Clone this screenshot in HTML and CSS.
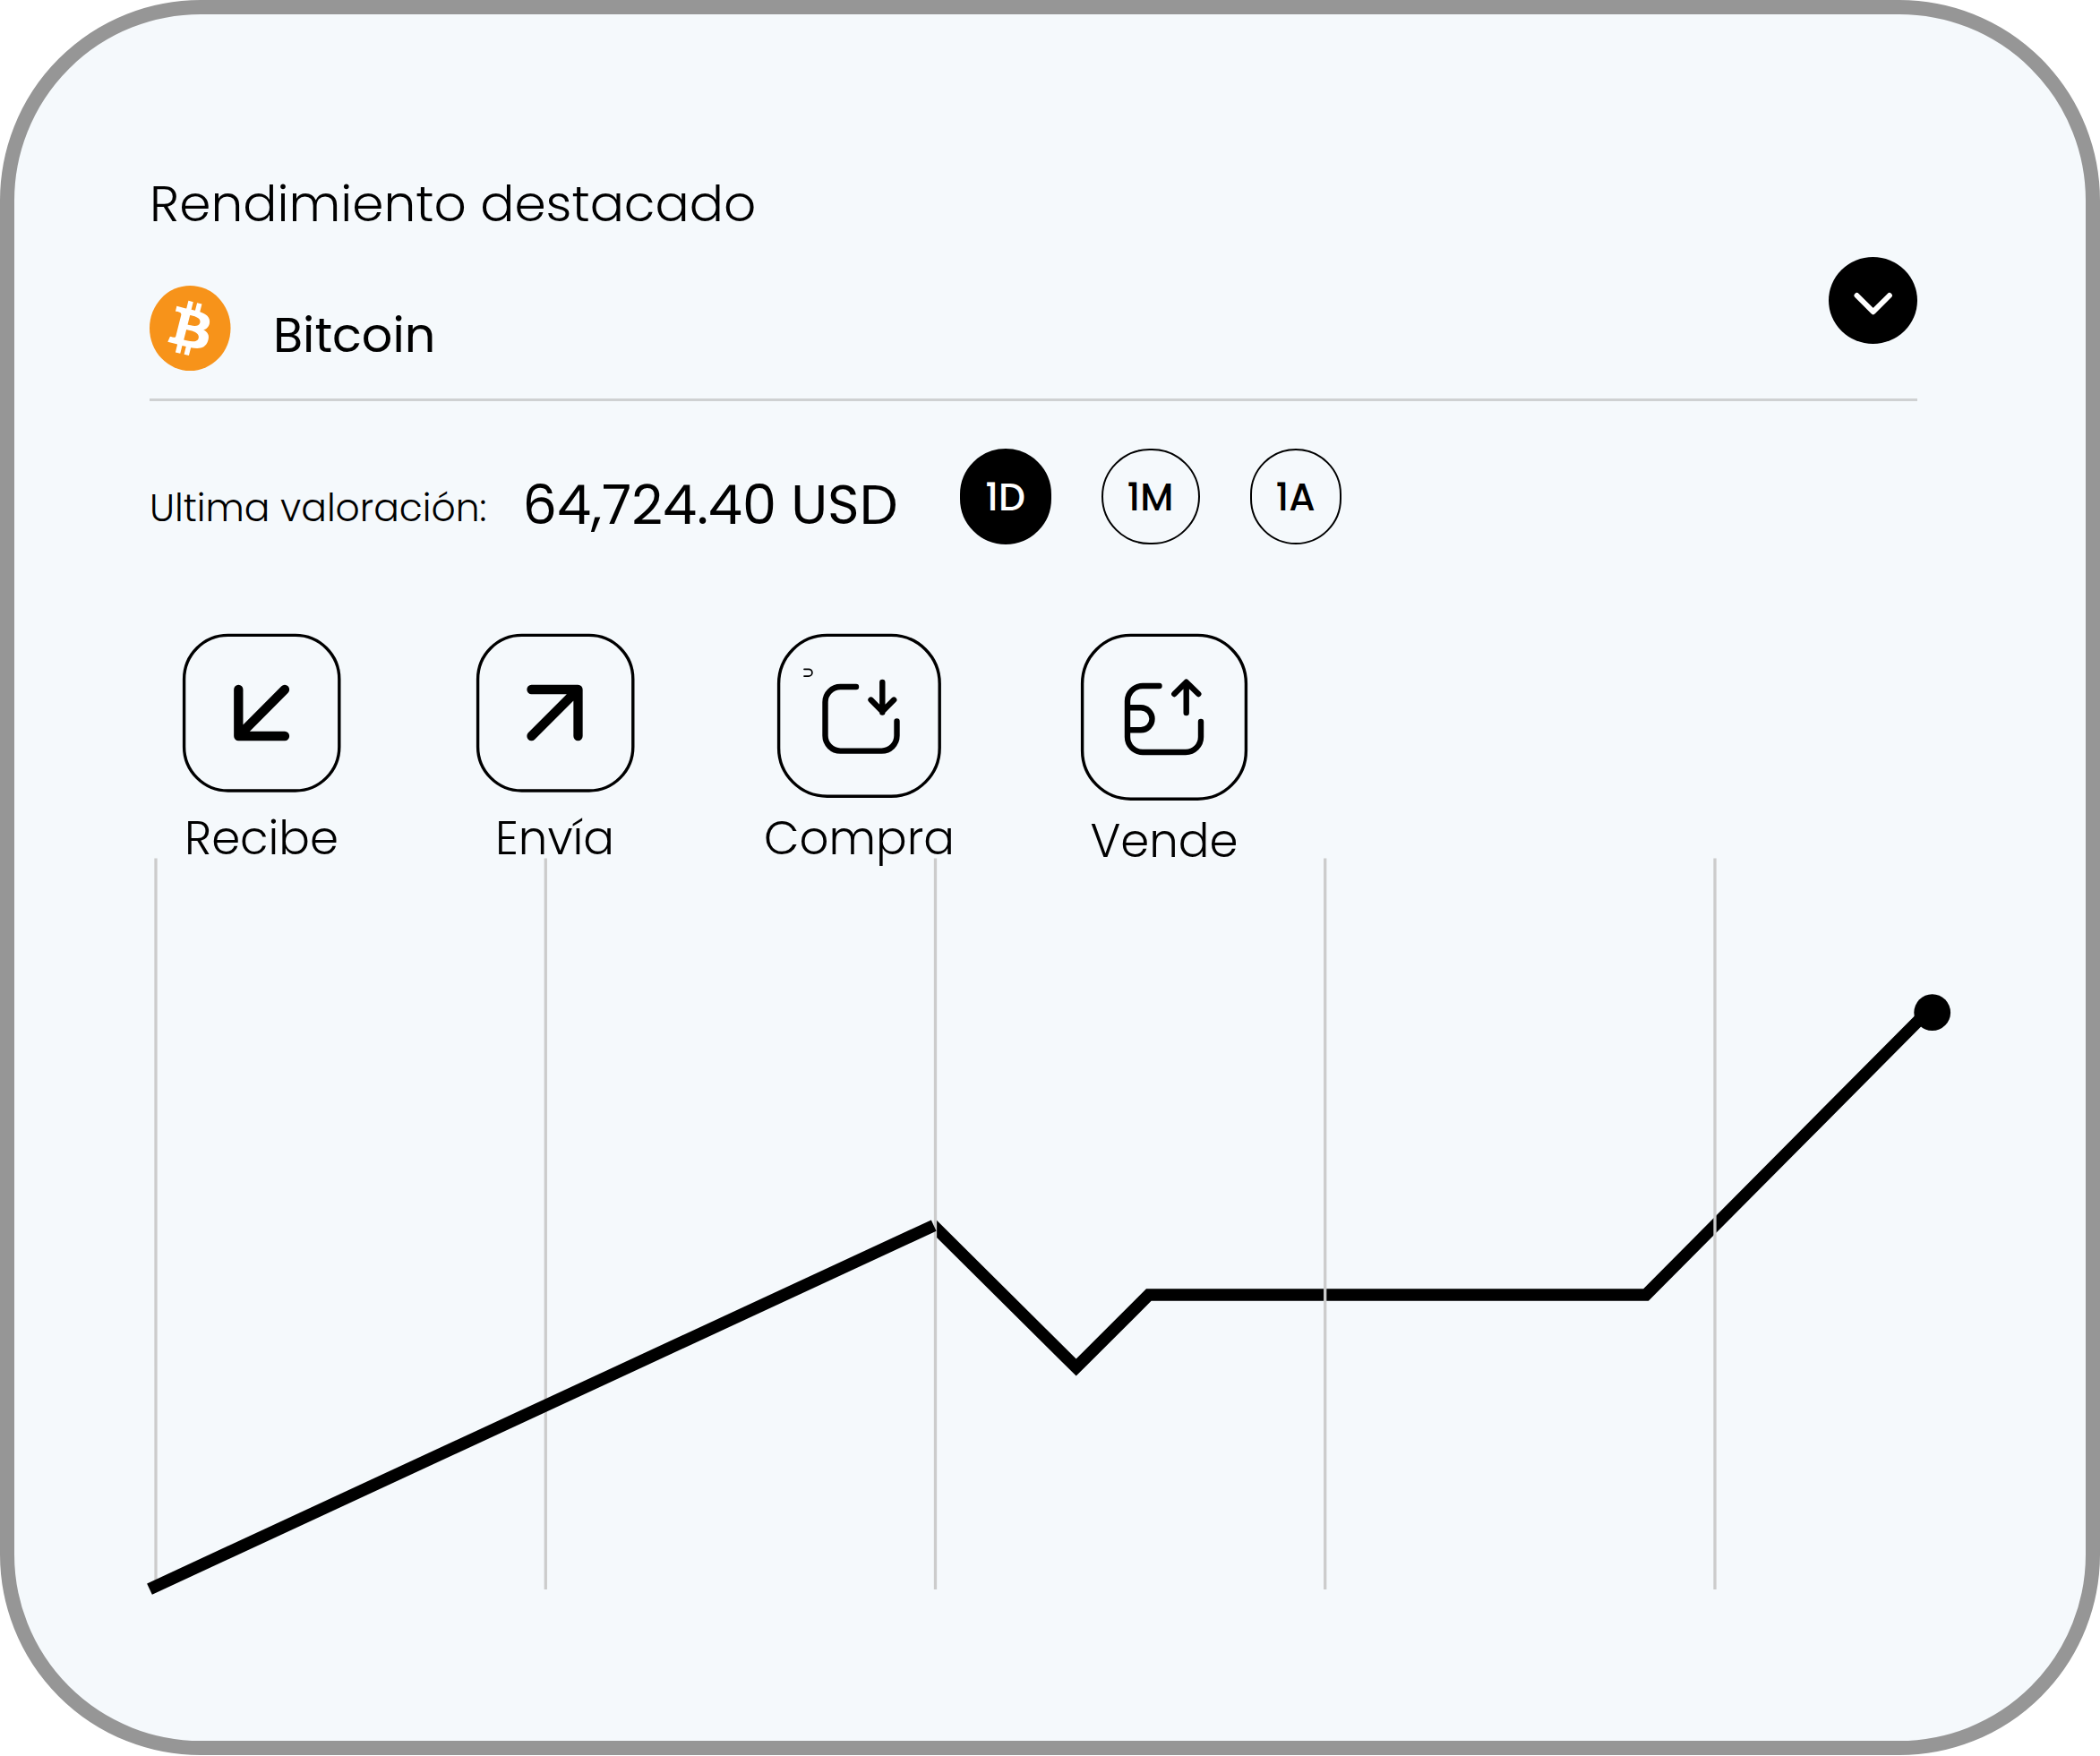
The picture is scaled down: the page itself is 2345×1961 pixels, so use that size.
FILE: index.html
```html
<!DOCTYPE html>
<html lang="es">
<head>
    <meta charset="UTF-8">
    <title>Rendimiento destacado</title>
    <link rel="stylesheet" href="styles.css">
</head>
<body>
    <div class="card">
        <h1 class="title">Rendimiento destacado</h1>

        <div class="coin-row">
            <div class="coin">
                <svg class="coin-logo" viewBox="0 0 32 32" preserveAspectRatio="none">
                    <circle cx="16" cy="16" r="16" fill="#f7931a"/>
                    <path transform="translate(-1.8 -.55) scale(1.1 1.035)" fill="#fff" d="M23.189 14.02c.314-2.096-1.283-3.223-3.465-3.975l.708-2.84-1.728-.43-.69 2.765c-.454-.114-.92-.22-1.385-.326l.695-2.783L15.596 6l-.708 2.839c-.376-.086-.746-.17-1.104-.26l.002-.009-2.384-.595-.46 1.846s1.283.294 1.256.312c.7.175.826.638.805 1.006l-.806 3.235c.048.012.11.03.18.057l-.183-.045-1.13 4.532c-.086.212-.303.531-.793.41.018.025-1.256-.313-1.256-.313l-.858 1.978 2.25.561c.418.105.828.215 1.231.318l-.715 2.872 1.727.43.708-2.84c.472.127.93.245 1.378.357l-.706 2.828 1.728.43.715-2.866c2.948.558 5.164.333 6.097-2.333.752-2.146-.037-3.385-1.588-4.192 1.13-.26 1.98-1.003 2.207-2.538zm-3.95 5.538c-.533 2.147-4.148.986-5.32.695l.95-3.805c1.172.293 4.929.872 4.37 3.11zm.535-5.569c-.487 1.953-3.495.96-4.47.717l.86-3.45c.975.243 4.118.696 3.61 2.733z"/>
                </svg>
                <span class="coin-name">Bitcoin</span>
            </div>
            <button class="dropdown">
                <svg viewBox="0 0 44 26"><path d="M3.500 4l18.200 18.200L39.900 4"/></svg>
            </button>
        </div>

        <div class="value-row">
            <div class="value-label">Ultima valoración:</div>
            <div class="value">64,724.40 USD</div>
            <div class="periods">
                <button class="period active">1D</button>
                <button class="period wide">1M</button>
                <button class="period">1A</button>
            </div>
        </div>

        <div class="actions">
            <div class="action">
                <svg class="icon" width="176" height="177" viewBox="-3 -3 176 177">
                    <rect class="box" x="-1.400" y="-1.600" width="173.200" height="173.600" rx="49"/>
                    <path class="arrow" d="M59.300 59v52H111M111 59L59.300 111"/>
                </svg>
                <span class="label">Recibe</span>
            </div>
            <div class="action envia">
                <svg class="icon" width="176" height="177" viewBox="-3 -3 176 177">
                    <rect class="box" x="-1.400" y="-1.600" width="173.200" height="173.600" rx="49"/>
                    <path class="arrow" d="M58.500 59h52v52M58.500 111l52-52"/>
                </svg>
                <span class="label">Envía</span>
            </div>
            <div class="action compra">
                <svg class="icon" width="183" height="183" viewBox="-3 -3 183 183">
                    <rect class="box" x="-1.400" y="-1.600" width="179.600" height="179.800" rx="54"/>
                    <path class="hook" d="M27 36.300h5a3.900 3.900 0 0 1 0 7.800h-5"/>
                    <path class="tray" d="M85 56H67.500a17 17 0 0 0-17 17v37.600a17 17 0 0 0 17 17h46a17 17 0 0 0 17-17V94.500M114.300 51v33.500M101.500 70.600l12.800 13 12.900-13"/>
                </svg>
                <span class="label">Compra</span>
            </div>
            <div class="action vende">
                <svg class="icon" width="186" height="186" viewBox="-3 -3 186 186">
                    <rect class="box" x="-1.400" y="-1.600" width="182.800" height="182.800" rx="54"/>
                    <path class="tray" d="M84.500 55H66a17 17 0 0 0-17 17v40a17 17 0 0 0 17 17h48a17 17 0 0 0 17-17V95M49 79.300h15a12.500 12.500 0 0 1 0 25H49M114.700 85V51M101.300 64l13.400-13.300L128.300 64"/>
                </svg>
                <span class="label">Vende</span>
            </div>
        </div>

        <svg class="chart" viewBox="167 958 2012 830">
            <clipPath id="afterThird">
                <rect x="1046" y="958" width="1133" height="830"/>
            </clipPath>
            <path class="line" clip-path="url(#afterThird)" d="M1036 1362.400L1201.700 1527l81.100-81H1838L2150 1132"/>
            <path class="grid" d="M174 958.500V1775M609.300 958.500V1775M1044.500 958.500V1775M1479.700 958.500V1775M1915 958.500V1775"/>
            <path class="line" d="M167 1774.600L1042.700 1368.600"/>
            <circle cx="2157.700" cy="1130.700" r="20.400"/>
        </svg>
    </div>
</body>
</html>
```

FILE: styles.css
```css
* {
    box-sizing: border-box;
}

body {
    margin: 0;
    background: #fff;
    color: #000;
    font-family: Poppins, Inter, "Open Sans", sans-serif;
}

.card {
    width: 2345px;
    height: 1960px;
    padding: 182px 0 0 151px;
    background: #f5f9fc;
    border: 16px solid #969696;
    border-radius: 224px;
    overflow: hidden;
    white-space: nowrap;
}

.title {
    margin: 0;
    font-size: 56.6px;
    font-weight: 300;
    line-height: 60px;
}

.coin-row {
    display: flex;
    justify-content: space-between;
    align-items: flex-start;
    width: 1974px;
    height: 161px;
    margin-top: 29px;
    border-bottom: 3px solid #cfd1d2;
}

.coin {
    display: flex;
    padding-top: 32px;
}

.coin-logo {
    width: 90.5px;
    height: 95px;
}

.coin-name {
    margin: 25px 0 0 47.5px;
    font-size: 54px;
    line-height: 60px;
}

button {
    padding: 0;
    border: none;
    font-family: inherit;
    color: inherit;
    cursor: pointer;
}

.dropdown {
    display: flex;
    justify-content: center;
    align-items: center;
    width: 99px;
    height: 97px;
    background: #000;
    border-radius: 50%;
}

.dropdown svg {
    width: 44px;
    height: 26px;
    margin-top: 6px;
    fill: none;
    stroke: #fff;
    stroke-width: 6;
    stroke-linecap: round;
    stroke-linejoin: round;
}

.value-row {
    display: flex;
    align-items: flex-start;
    height: 160px;
    padding-top: 53px;
}

.value-label {
    width: 416.5px;
    padding-top: 41px;
    font-size: 42.4px;
    font-weight: 300;
    line-height: 50px;
}

.value {
    width: 488px;
    padding-top: 33px;
    font-size: 60.6px;
    line-height: 60px;
}

.periods {
    display: flex;
    gap: 56px;
}

.period {
    width: 102px;
    height: 107px;
    padding-top: 1px;
    border: 2px solid #000;
    border-radius: 52px;
    background: none;
    font-size: 42.2px;
    font-weight: 500;
}

.period.wide {
    width: 110px;
    border-radius: 54px;
}

.period.active {
    background: #000;
    color: #fff;
}

.actions {
    display: flex;
    height: 250px;
    margin: 100px 0 0 15px;
}

.action {
    display: flex;
    flex-direction: column;
    align-items: center;
    width: 220px;
}

.icon {
    display: block;
    overflow: visible;
    fill: none;
    stroke: #000;
    stroke-linecap: round;
    stroke-linejoin: round;
}

.label {
    margin-top: 21px;
    font-size: 51.4px;
    font-weight: 300;
    line-height: 60px;
}

.envia {
    margin-left: 107.5px;
}

.compra {
    margin-left: 120px;
}

.vende {
    margin-left: 120.5px;
}

.compra .label,
.vende .label {
    margin-top: 15px;
}

.box {
    stroke-width: 3.4;
}

.arrow {
    stroke-width: 10.3;
}

.tray {
    stroke-width: 6.4;
}

.hook {
    stroke-width: 1.7;
}

.chart {
    display: block;
    width: 2012px;
    height: 830px;
    overflow: visible;
}

.line {
    fill: none;
    stroke: #000;
    stroke-width: 13.6;
}

.grid {
    stroke: #ccc;
    stroke-width: 3.3;
}
```
